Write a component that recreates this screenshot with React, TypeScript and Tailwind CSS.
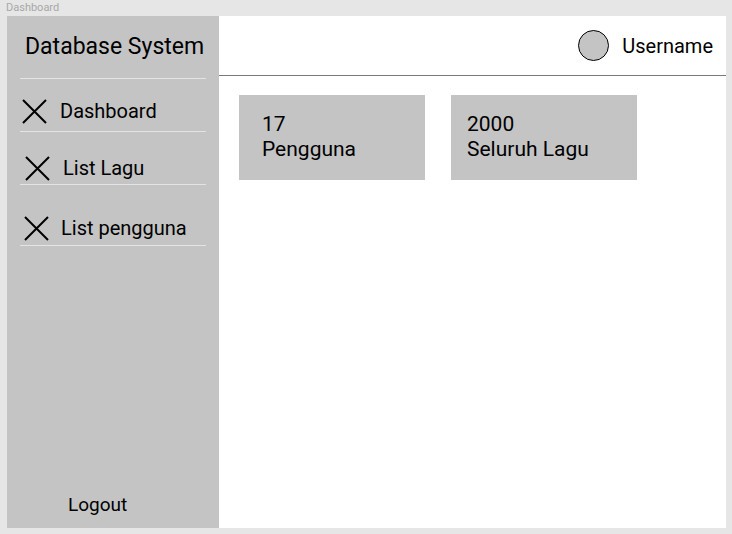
import React from "react";

function XIcon() {
  return (
    <svg width="25" height="25" viewBox="0 0 25 25" className="shrink-0">
      <path d="M1 1 L24 24 M24 1 L1 24" stroke="#000" strokeWidth="2" fill="none" />
    </svg>
  );
}

export default function App() {
  const font = { fontFamily: "Roboto, 'Noto Sans', sans-serif" };
  return (
    <div className="w-[732px] h-[534px] bg-[#e6e6e6] relative overflow-hidden" style={font}>
      <div className="h-[16px] pl-[6px] text-[11px] leading-[16px] text-[#a8a8a8]">Dashboard</div>
      <div className="ml-[7px] w-[719px] h-[512px] flex bg-white">
        <aside className="w-[212px] h-full bg-[#c4c4c4] flex flex-col text-black">
          <div className="h-[62px] pl-[18px] pt-[1px] flex items-center text-[23px]">Database System</div>
          <div className="mx-[13px] h-px bg-[#e4e4e4]" />
          <div className="h-[52px] pl-[15px] pb-[6px] flex items-end">
            <div className="h-[28px] flex items-center gap-[13px] text-[20px]">
              <XIcon />
              <span>Dashboard</span>
            </div>
          </div>
          <div className="mx-[13px] h-px bg-[#e4e4e4]" />
          <div className="h-[52px] pl-[18px] pb-[2px] flex items-end">
            <div className="h-[28px] flex items-center gap-[13px] text-[20px]">
              <XIcon />
              <span>List Lagu</span>
            </div>
          </div>
          <div className="mx-[13px] h-px bg-[#e4e4e4]" />
          <div className="h-[60px] pl-[17px] pb-[3px] flex items-end">
            <div className="h-[28px] flex items-center gap-[12px] text-[20px]">
              <XIcon />
              <span>List pengguna</span>
            </div>
          </div>
          <div className="mx-[13px] h-px bg-[#e4e4e4]" />
          <div className="flex-1" />
          <div className="h-[28px] mb-[9px] pl-[61px] flex items-center text-[19px]">Logout</div>
        </aside>
        <main className="flex-1 flex flex-col">
          <div className="h-[60px] border-b border-[#7a7a7a] flex items-center justify-end pr-[13px] gap-[13px]">
            <div className="w-[31px] h-[31px] rounded-full bg-[#c4c4c4] border-[1.5px] border-black" />
            <span className="text-[20px] text-black">Username</span>
          </div>
          <div className="pt-[19px] pl-[20px] flex gap-[26px]">
            <div className="w-[186px] h-[85px] bg-[#c4c4c4] pl-[23px] pt-[17px] text-[21px] leading-[25px] text-black">
              <div>17</div>
              <div>Pengguna</div>
            </div>
            <div className="w-[186px] h-[85px] bg-[#c4c4c4] pl-[16px] pt-[17px] text-[21px] leading-[25px] text-black">
              <div>2000</div>
              <div>Seluruh Lagu</div>
            </div>
          </div>
        </main>
      </div>
    </div>
  );
}
